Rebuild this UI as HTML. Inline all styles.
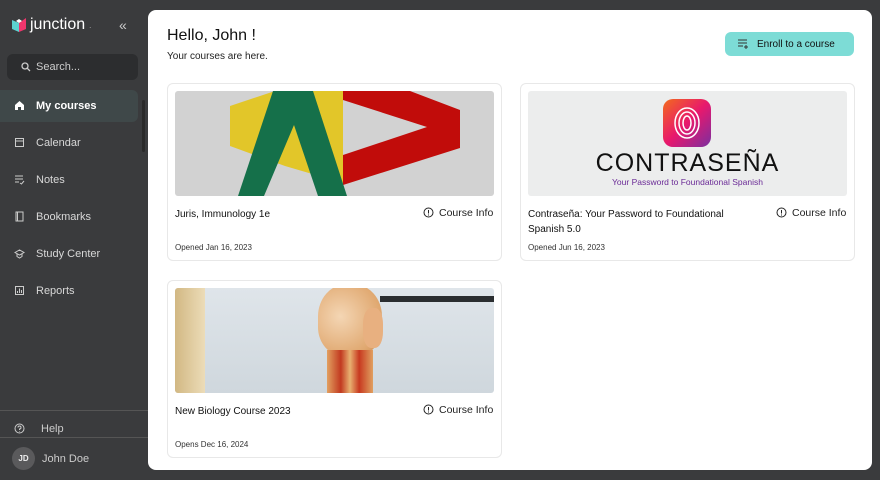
<!DOCTYPE html>
<html><head><meta charset="utf-8"><style>
*{box-sizing:border-box;margin:0;padding:0}
body{width:880px;height:480px;background:#3a3b3d;font-family:"Liberation Sans",sans-serif;position:relative;overflow:hidden}
.side{position:absolute;left:0;top:0;width:148px;height:480px;color:#d8d8d8;font-size:11px}
.logo{position:absolute;left:12px;top:16px;font-size:16px;color:#fff;display:flex;align-items:center;gap:4px}
.collapse{position:absolute;left:119px;top:17px;color:#ccc;font-size:14px}
.search{position:absolute;left:7px;top:54px;width:131px;height:26px;background:#2c2d2f;border-radius:6px;color:#ccc;padding:7px 0 0 29px}
.search svg{position:absolute;left:14px;top:8px}
.nav{position:absolute;left:0;width:138px;height:32px;padding:10px 0 0 36px}
.nav svg{position:absolute;left:14px;top:10px}
.nav.act{background:#3f4849;border-radius:0 6px 6px 0;color:#fff;font-weight:bold}
.sb{position:absolute;left:142px;top:100px;width:3px;height:52px;background:#2a2a2a;border-radius:2px}
.line{position:absolute;left:0;width:148px;height:1px;background:#555}
.main{position:absolute;left:148px;top:10px;width:724px;height:460px;background:#fff;border-radius:8px}
h1{position:absolute;left:19px;top:17px;font-size:16px;font-weight:normal;color:#111}
.sub{position:absolute;left:19px;top:41px;font-size:10px;color:#222}
.btn{position:absolute;left:577px;top:22px;width:129px;height:24px;background:#7ddcd6;border-radius:6px;font-size:10px;color:#111;padding:7px 0 0 32px}
.btn svg{position:absolute;left:13px;top:7px}
.card{position:absolute;width:335px;height:178px;border:1px solid #e8e8e8;border-radius:6px}
.img{position:absolute;left:7px;top:7px;width:319px;height:105px;border-radius:3px;overflow:hidden}
.t{position:absolute;left:7px;top:123px;font-size:10px;color:#111;line-height:15px;width:230px}
.ci{position:absolute;left:271px;top:123px;font-size:10.5px;color:#222}
.ci svg{position:absolute;left:-16px;top:0}
.d{position:absolute;left:7px;top:159px;font-size:8px;color:#333}
</style></head><body>
<div class="side">
 <div class="logo"><svg width="14" height="14" viewBox="0 0 14 14"><path d="M0 2L7 5V14L0 11Z" fill="#5cd3d0"/><path d="M14 0L7 5V14L14 11Z" fill="#f0366d"/><path d="M4 3L7 5 10 3 7 1Z" fill="#fff"/></svg>junction<span style="font-size:8px;color:#aaa">.</span></div>
 <div class="collapse">«</div>
 <div class="search"><svg width="10" height="10" viewBox="0 0 10 10"><circle cx="4" cy="4" r="3" stroke="#ccc" fill="none" stroke-width="1.3"/><path d="M6.3 6.3L9 9" stroke="#ccc" stroke-width="1.3"/></svg>Search...</div>
 <div class="nav act" style="top:90px"><svg width="11" height="11" viewBox="0 0 11 11"><path d="M1 5L5.5 1 10 5V10H7V7H4V10H1Z" fill="#fff"/></svg>My courses</div>
 <div class="nav" style="top:127px"><svg width="11" height="11" viewBox="0 0 11 11" fill="none" stroke="#ccc"><rect x="1.5" y="1.5" width="8" height="8"/><path d="M1.5 4h8"/></svg>Calendar</div>
 <div class="nav" style="top:164px"><svg width="11" height="11" viewBox="0 0 11 11" fill="none" stroke="#ccc"><path d="M1 2h8M1 5h8M1 8h4M6 9l1.5 1 2.5-3"/></svg>Notes</div>
 <div class="nav" style="top:201px"><svg width="11" height="11" viewBox="0 0 11 11" fill="none" stroke="#ccc"><rect x="2" y="1" width="7" height="9"/><path d="M3.5 1v9"/></svg>Bookmarks</div>
 <div class="nav" style="top:238px"><svg width="11" height="11" viewBox="0 0 11 11" fill="none" stroke="#ccc"><path d="M1 4.5L5.5 2 10 4.5 5.5 7Z M3 5.5V8.5L5.5 10 8 8.5V5.5"/></svg>Study Center</div>
 <div class="nav" style="top:275px"><svg width="11" height="11" viewBox="0 0 11 11" fill="none" stroke="#ccc"><rect x="1.5" y="1.5" width="8" height="8"/><path d="M3.5 8V6M5.5 8V3.5M7.5 8V5"/></svg>Reports</div>
 <div class="sb"></div>
 <div class="line" style="top:410px"></div>
 <div class="nav" style="top:413px;padding-left:41px;color:#ccc"><svg width="11" height="11" viewBox="0 0 11 11" fill="none" stroke="#ccc"><circle cx="5.5" cy="5.5" r="4.5"/><path d="M4 4.5a1.5 1.5 0 1 1 1.5 1.5v1M5.5 8v.5"/></svg>Help</div>
 <div class="line" style="top:437px"></div>
 <div style="position:absolute;left:12px;top:447px;width:23px;height:23px;border-radius:50%;background:#5a5a5c;color:#eee;font-size:8px;font-weight:bold;text-align:center;line-height:23px">JD</div>
 <div style="position:absolute;left:42px;top:453px;color:#ccc">John Doe</div>
</div>
<div class="main">
 <h1>Hello, John !</h1>
 <div class="sub">Your courses are here.</div>
 <div class="btn"><svg width="11" height="10" viewBox="0 0 11 10" fill="none" stroke="#333"><path d="M0 1h9M0 4h9M0 7h5M8 6v4M6 8h4"/></svg>Enroll to a course</div>

 <div class="card" style="left:19px;top:73px">
  <div class="img" style="background:#d2d2d2"><svg width="319" height="105" viewBox="0 0 319 105">
   <path d="M55 15L100 0H168V92L110 75 55 55Z" fill="#e2c629"/>
   <path d="M168 0H235L285 19V57L168 94V64L252 36 168 9Z" fill="#c10c0a"/>
   <path d="M98 0H138L172 105H143L119 34 89 105H63Z" fill="#15704a"/>
  </svg></div>
  <div class="t">Juris, Immunology 1e</div>
  <div class="ci"><svg width="11" height="11" viewBox="0 0 11 11" fill="none" stroke="#222"><circle cx="5.5" cy="5.5" r="4.5"/><path d="M5.5 3v3.5M5.5 7.5v1"/></svg>Course Info</div>
  <div class="d">Opened Jan 16, 2023</div>
 </div>

 <div class="card" style="left:372px;top:73px">
  <div class="img" style="background:#eceded">
   <div style="position:absolute;left:135px;top:8px;width:48px;height:48px;border-radius:10px;background:linear-gradient(135deg,#f36b1c,#e8186d 50%,#7a2fa0)"><svg width="48" height="48" viewBox="0 0 48 48" fill="none" stroke="#fff" stroke-width="1.5"><ellipse cx="24" cy="24" rx="12" ry="15"/><ellipse cx="24" cy="24" rx="8" ry="11"/><ellipse cx="24" cy="24" rx="4" ry="7"/></svg></div>
   <div style="position:absolute;left:0;width:319px;top:58px;text-align:center;font-size:25px;color:#111;letter-spacing:1px;line-height:28px">CONTRASEÑA</div>
   <div style="position:absolute;left:0;width:319px;top:86px;text-align:center;font-size:8.5px;color:#6a2a96">Your Password to Foundational Spanish</div>
  </div>
  <div class="t">Contraseña: Your Password to Foundational Spanish 5.0</div>
  <div class="ci"><svg width="11" height="11" viewBox="0 0 11 11" fill="none" stroke="#222"><circle cx="5.5" cy="5.5" r="4.5"/><path d="M5.5 3v3.5M5.5 7.5v1"/></svg>Course Info</div>
  <div class="d">Opened Jun 16, 2023</div>
 </div>

 <div class="card" style="left:19px;top:270px">
  <div class="img" style="background:linear-gradient(180deg,#dfe5ea,#cfd7dd)">
   <div style="position:absolute;left:0;top:0;width:30px;height:105px;background:linear-gradient(90deg,#d2b883,#ecdcb8)"></div>
   <div style="position:absolute;left:205px;top:8px;width:114px;height:6px;background:#2a2d30"></div>
   <div style="position:absolute;left:143px;top:-4px;width:64px;height:72px;border-radius:45% 45% 40% 40%;background:radial-gradient(circle at 35% 45%,#f4d6b4,#e0a870 70%,#c9884a)"></div>
   <div style="position:absolute;left:188px;top:20px;width:20px;height:40px;background:#e8b080;border-radius:40%"></div>
   <div style="position:absolute;left:152px;top:62px;width:46px;height:43px;background:linear-gradient(90deg,#e2a060,#c23a20 30%,#e8b070 50%,#c83a20 70%,#e0a060)"></div>
  </div>
  <div class="t">New Biology Course 2023</div>
  <div class="ci"><svg width="11" height="11" viewBox="0 0 11 11" fill="none" stroke="#222"><circle cx="5.5" cy="5.5" r="4.5"/><path d="M5.5 3v3.5M5.5 7.5v1"/></svg>Course Info</div>
  <div class="d">Opens Dec 16, 2024</div>
 </div>
</div>
</body></html>
